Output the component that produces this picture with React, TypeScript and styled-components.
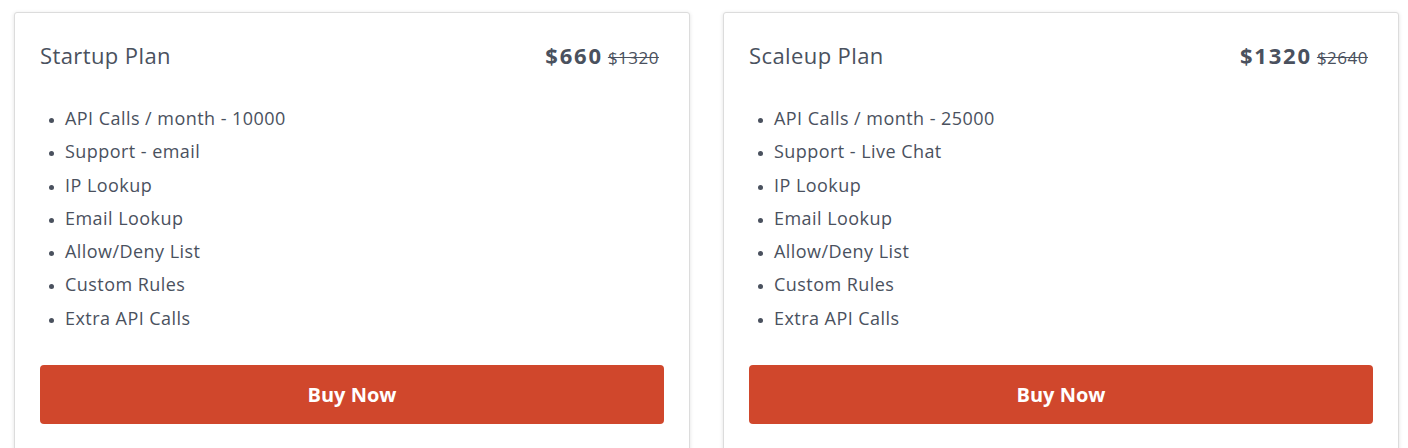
import React from "react";
import styled, { createGlobalStyle } from "styled-components";

const Global = createGlobalStyle`
  html, body { margin: 0; padding: 0; background: #fff; }
  body { font-family: "Open Sans", "Lato", sans-serif; color: #4a515e; }
`;

const Page = styled.div`
  display: flex;
  align-items: flex-start;
  gap: 33px;
  padding: 12px 0 0 14px;
  height: 448px;
  box-sizing: border-box;
  overflow: hidden;
`;

const Card = styled.div`
  width: 676px;
  flex: none;
  box-sizing: border-box;
  border: 1px solid #dcdcdc;
  border-radius: 3px;
  box-shadow: 0 1px 4px rgba(0, 0, 0, 0.12);
  padding: 27px 25px 60px 25px;
  background: #fff;
`;

const Header = styled.div`
  display: flex;
  justify-content: space-between;
  align-items: baseline;
  height: 33px;
`;

const Title = styled.h3`
  margin: 0;
  font-size: 22px;
  font-weight: 400;
  letter-spacing: 0.4px;
  color: #4a515e;
`;

const Price = styled.div`
  font-size: 22px;
  font-weight: 700;
  letter-spacing: 1.8px;
  color: #4a515e;
  padding-right: 5px;
`;

const OldPrice = styled.s`
  font-size: 17px;
  font-weight: 400;
  letter-spacing: 0.5px;
  margin-left: 5px;
`;

const List = styled.ul`
  margin: 29px 0 0 0;
  padding: 0 0 0 25px;
  list-style: disc;
`;

const Item = styled.li`
  font-size: 18px;
  letter-spacing: 0.45px;
  line-height: 33.3px;
  color: #4a515e;
  &::marker { font-size: 13px; }
`;

const BuyButton = styled.button`
  display: block;
  width: 100%;
  height: 59px;
  margin-top: 30px;
  border: none;
  border-radius: 4px;
  background: #d0472c;
  color: #fff;
  font-family: inherit;
  font-size: 20px;
  font-weight: 700;
  cursor: pointer;
`;

type Plan = { name: string; price: string; old: string; items: string[] };

const plans: Plan[] = [
  {
    name: "Startup Plan",
    price: "$660",
    old: "$1320",
    items: [
      "API Calls / month - 10000",
      "Support - email",
      "IP Lookup",
      "Email Lookup",
      "Allow/Deny List",
      "Custom Rules",
      "Extra API Calls",
    ],
  },
  {
    name: "Scaleup Plan",
    price: "$1320",
    old: "$2640",
    items: [
      "API Calls / month - 25000",
      "Support - Live Chat",
      "IP Lookup",
      "Email Lookup",
      "Allow/Deny List",
      "Custom Rules",
      "Extra API Calls",
    ],
  },
];

export default function App() {
  return (
    <>
      <Global />
      <Page>
        {plans.map((p) => (
          <Card key={p.name}>
            <Header>
              <Title>{p.name}</Title>
              <Price>
                {p.price}
                <OldPrice>{p.old}</OldPrice>
              </Price>
            </Header>
            <List>
              {p.items.map((it) => (
                <Item key={it}>{it}</Item>
              ))}
            </List>
            <BuyButton>Buy Now</BuyButton>
          </Card>
        ))}
      </Page>
    </>
  );
}
